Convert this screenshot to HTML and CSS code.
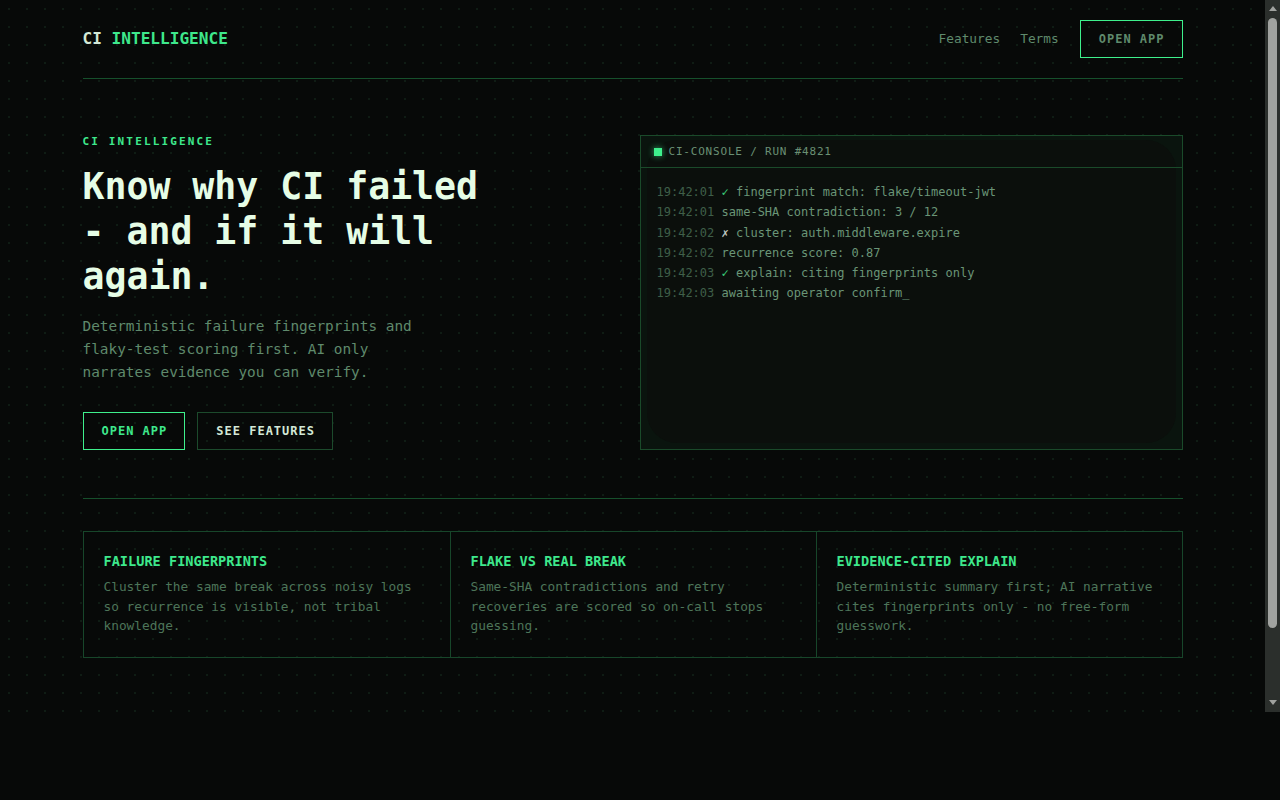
FILE: index.html
```html
<!DOCTYPE html>
<html lang="en">
<head>
<meta charset="utf-8">
<title>CI Intelligence</title>
<link rel="stylesheet" href="styles.css">
</head>
<body>
<div class="frame">
  <div class="app">
    <div class="wrap">
      <header class="topbar">
        <div class="logo"><span class="logo-ci">CI</span> <span class="logo-accent">INTELLIGENCE</span></div>
        <nav class="nav">
          <a class="nav-link" href="#features">Features</a>
          <a class="nav-link" href="#terms">Terms</a>
          <a class="btn btn-nav" href="#app">OPEN APP</a>
        </nav>
      </header>

      <section class="hero">
        <div class="hero-copy">
          <div class="eyebrow">CI INTELLIGENCE</div>
          <h1 class="headline">Know why CI failed - and if it will again.</h1>
          <p class="lead">Deterministic failure fingerprints and flaky-test scoring first. AI only narrates evidence you can verify.</p>
          <div class="actions">
            <a class="btn btn-primary" href="#app">OPEN APP</a>
            <a class="btn btn-ghost" href="#features">SEE FEATURES</a>
          </div>
        </div>

        <div class="console">
          <div class="console-head">
            <span class="console-dot"></span>
            <span class="console-title">CI-CONSOLE / RUN #4821</span>
          </div>
          <div class="console-body">
            <div class="log"><span class="ts">19:42:01</span> <span class="ok">✓</span> fingerprint match: flake/timeout-jwt</div>
            <div class="log"><span class="ts">19:42:01</span> same-SHA contradiction: 3 / 12</div>
            <div class="log"><span class="ts">19:42:02</span> <span class="bad">✗</span> cluster: auth.middleware.expire</div>
            <div class="log"><span class="ts">19:42:02</span> recurrence score: 0.87</div>
            <div class="log"><span class="ts">19:42:03</span> <span class="ok">✓</span> explain: citing fingerprints only</div>
            <div class="log"><span class="ts">19:42:03</span> awaiting operator confirm_</div>
          </div>
        </div>
      </section>

      <section class="features" id="features">
        <div class="feature">
          <h3 class="feature-title">FAILURE FINGERPRINTS</h3>
          <p class="feature-text">Cluster the same break across noisy logs so recurrence is visible, not tribal knowledge.</p>
        </div>
        <div class="feature">
          <h3 class="feature-title">FLAKE VS REAL BREAK</h3>
          <p class="feature-text">Same-SHA contradictions and retry recoveries are scored so on-call stops guessing.</p>
        </div>
        <div class="feature">
          <h3 class="feature-title">EVIDENCE-CITED EXPLAIN</h3>
          <p class="feature-text">Deterministic summary first; AI narrative cites fingerprints only - no free-form guesswork.</p>
        </div>
      </section>
    </div>
  </div>
  <div class="scrollbar" aria-hidden="true">
    <span class="sb-arrow sb-up"></span>
    <span class="sb-thumb"></span>
    <span class="sb-arrow sb-down"></span>
  </div>
</div>
</body>
</html>
```

FILE: styles.css
```css
* { box-sizing: border-box; }

html, body {
  margin: 0;
  padding: 0;
  background: #070908;
  height: 100%;
}

body {
  font-family: "DejaVu Sans Mono", "Liberation Mono", monospace;
  color: #5f8a6c;
}

.frame {
  display: flex;
  height: 712px;
}

.app {
  flex: 1;
  min-width: 0;
  overflow: hidden;
  background-color: #070908;
  background-image: radial-gradient(circle at 9px 9px, #0f1c14 0.9px, transparent 1.3px);
  background-size: 18px 18px;
}

/* scrollbar strip */
.scrollbar {
  width: 15px;
  flex: none;
  background: #2b2f2c;
  display: flex;
  flex-direction: column;
  align-items: center;
  padding: 6px 0 7px;
}

.sb-arrow {
  width: 0;
  height: 0;
  border-left: 4.5px solid transparent;
  border-right: 4.5px solid transparent;
}
.sb-up { border-bottom: 5px solid #a0a29f; }
.sb-down { border-top: 5px solid #a0a29f; margin-top: auto; }

.sb-thumb {
  width: 9px;
  height: 610px;
  margin-top: 7px;
  border-radius: 5px;
  background: #a0a29f;
}

.wrap {
  width: 1100px;
  margin: 0 auto;
}

a { text-decoration: none; }

/* header */
.topbar {
  display: flex;
  align-items: center;
  justify-content: space-between;
  padding: 20px 0;
  border-bottom: 1px solid #16502c;
}

.logo {
  font-size: 16.1px;
  font-weight: 700;
  line-height: 20px;
  white-space: pre;
}
.logo-ci { color: #d3e8d6; }
.logo-accent { color: #3ee88c; }

.nav {
  display: flex;
  align-items: center;
  gap: 20px;
}

.nav-link {
  color: #5f8a6c;
  font-size: 12.8px;
  line-height: 16px;
}

.btn {
  display: inline-block;
  font-size: 12px;
  font-weight: 700;
  line-height: 14px;
  letter-spacing: 1px;
  padding: 11px 17px 11px 18px;
  border: 1px solid #1c4a2c;
}

.btn-nav {
  border-color: #3ef08c;
  color: #5f8a6c;
  margin-left: 1px;
}

/* hero */
.hero {
  display: grid;
  grid-template-columns: 1fr 543px;
  gap: 57px;
  padding: 56px 0 48px;
  border-bottom: 1px solid #16502c;
}

.eyebrow {
  font-size: 11px;
  line-height: 13px;
  font-weight: 700;
  letter-spacing: 2.15px;
  color: #3ee88c;
}

.headline {
  margin: 16px 0 0;
  max-width: 425px;
  font-size: 36.5px;
  line-height: 45px;
  font-weight: 700;
  color: #e6fde6;
}

.lead {
  margin: 16px 0 0;
  max-width: 340px;
  font-size: 14.4px;
  line-height: 23px;
  color: #5f8a6c;
}

.actions {
  display: flex;
  gap: 12px;
  margin-top: 28px;
}

.btn-primary {
  border-color: #3ef08c;
  color: #3ee88c;
}

.btn-ghost {
  border-color: #1c4a2c;
  color: #d3e8d6;
}

/* console */
.console {
  position: relative;
  border: 1px solid #1a4a2a;
  background: #0a140e;
  display: flex;
  flex-direction: column;
}

.console::before {
  content: "";
  position: absolute;
  inset: 4px 6px 6px 6px;
  border-radius: 30px;
  background: #0b0f0c;
  pointer-events: none;
}

.console-head {
  position: relative;
  display: flex;
  align-items: center;
  gap: 7px;
  height: 32px;
  padding: 0 13px;
  border-bottom: 1px solid #1a4a2a;
}

.console-dot {
  width: 8px;
  height: 8px;
  background: #3ef08c;
  box-shadow: 0 0 6px rgba(62, 240, 140, 0.7);
}

.console-title {
  font-size: 11px;
  line-height: 14px;
  letter-spacing: 0.8px;
  color: #6a8f74;
}

.console-body {
  position: relative;
  padding: 14px 16px;
}

.log {
  font-size: 12px;
  line-height: 20.3px;
  color: #6a9577;
  white-space: pre;
}

.ts { color: #3f5f49; }
.ok { color: #3ccf7c; }
.bad { color: #c2cbc3; }

/* features */
.features {
  display: grid;
  grid-template-columns: repeat(3, 1fr);
  margin-top: 32px;
  border: 1px solid #17462a;
}

.feature {
  padding: 21px 20px 21px;
}
.feature + .feature {
  border-left: 1px solid #17462a;
}

.feature-title {
  margin: 0;
  font-size: 13.6px;
  line-height: 17px;
  font-weight: 700;
  color: #3ee88c;
}

.feature-text {
  margin: 7px 0 0;
  font-size: 12.8px;
  line-height: 19.6px;
  color: #4d7559;
}
```
